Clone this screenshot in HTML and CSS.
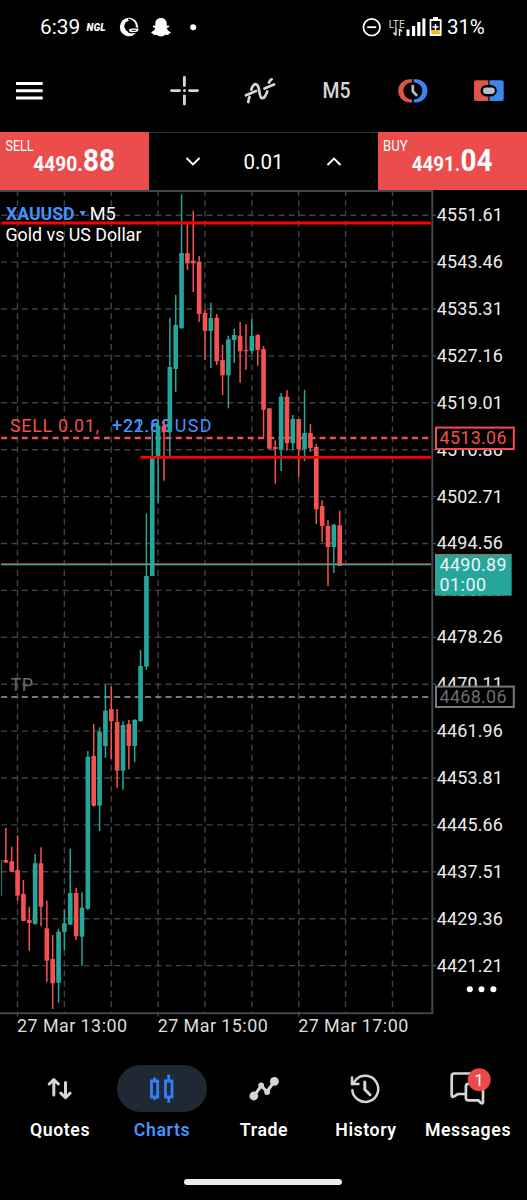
FILE: index.html
```html
<!DOCTYPE html>
<html lang="en">
<head>
<meta charset="utf-8">
<title>XAUUSD M5</title>
<link rel="stylesheet" href="styles.css">
</head>
<body>
<div class="phone">
  <header class="status">
    <span class="time">6:39</span>
    <span class="ngl">NGL</span>
    <svg class="st-notes" viewBox="118 15 80 24" width="80" height="24">
      <circle cx="129" cy="27" r="9.2" fill="#fff"/>
      <circle cx="130" cy="26.3" r="5.7" fill="#000"/>
      <path d="M128 19.5a7 7 0 0 1 7 6" stroke="#000" stroke-width="1.3" fill="none"/>
      <rect x="127.5" y="27.3" width="11.3" height="6" rx="3" fill="#000"/>
      <path d="M129 30.5a3 2 0 0 1 3-2h6.5a3 3 0 0 1-3 3.600h-3a3 2 0 0 1-3.500-1.600z" fill="#fff"/>
      <path d="M131.500 30.300h4.500" stroke="#000" stroke-width=".9"/>
      <path d="M161 18c3.700 0 5.700 2.600 5.700 5.800v2l1.700-.3c1 0 1.100 1.200.2 1.700l-1.800.9c.5 1.900 1.700 3.200 3.600 3.900.8.5.3 1.400-1.600 1.700l-.5 1.200-2.200-.1c-1.800.2-2.700 1.700-5.100 1.700s-3.300-1.500-5.100-1.700l-2.200.1-.5-1.200c-1.900-.3-2.400-1.200-1.600-1.700 1.900-.7 3.100-2 3.600-3.900l-1.800-.9c-.9-.5-.8-1.700.2-1.700l1.700.3v-2c0-3.200 2-5.800 5.700-5.800z" fill="#fff"/>
      <circle cx="193.200" cy="27.300" r="3" fill="#fff"/>
    </svg>
    <svg class="st-sys" viewBox="362 14 82 24" width="82" height="24">
      <circle cx="371.700" cy="26.200" r="8.300" fill="none" stroke="#fff" stroke-width="1.700"/>
      <path d="M367.200 26.200h9" stroke="#fff" stroke-width="1.800"/>
      <text x="388.700" y="27" class="lte" textLength="16" lengthAdjust="spacingAndGlyphs">LTE</text>
      <path d="M396 27v7m-2.500-2.500 2.500 3M399.500 35v-7m0 0 2.500 2.500" stroke="#ddd" stroke-width="1.500" fill="none"/>
      <path d="M406.500 28.500h3v6.500h-3zM412 25h3.200v10h-3.200zM417.200 21h3.200v14h-3.200zM422.400 17.500h3v17.500h-3z" fill="#fff"/>
      <path d="M433 16h5v2h2.600q1 0 1 1v15q0 1-1 1h-10q-1 0-1-1v-15q0-1 1-1h2.400z" fill="#fff"/>
      <path d="M431.300 20h8.500v9h-8.500z" fill="#000"/>
      <path d="M431.300 29h8.500v4.200h-8.500z" fill="#fbb812"/>
      <path d="M432.500 26h6M435.500 23v6" stroke="#fff" stroke-width="1.500"/>
    </svg>
    <span class="pct">31%</span>
  </header>

  <div class="toolbar">
    <svg viewBox="14 74 30 34" width="30" height="34"><path d="M16 83.500h26.700M16 90.700h26.700M16 98h26.700" stroke="#fff" stroke-width="2.900"/></svg>
    <svg class="t-cross" viewBox="168 74 32 34" width="32" height="34"><path d="M184.400 77.500v8M184.400 96v8M171.500 90.600h8M189.500 90.600h8" stroke="#d5d5d5" stroke-width="2.900" stroke-linecap="round"/><circle cx="184.500" cy="90.600" r="1.500" fill="#d5d5d5"/></svg>
    <svg class="t-ind" viewBox="243 74 34 34" width="34" height="34">
      <g fill="none" stroke="#d5d5d5" stroke-width="2.700" stroke-linecap="round">
        <path d="M246 95.300 256 91M264.500 88.500l9.500-4"/>
        <path d="M248.300 102.200c.2-2 .5-3.500 1.200-5.200M251.300 89.500c1.500-4.500 3.300-6 5.200-5 4 2 2 13.500 5.500 13.700 2.300.1 4.200-3.500 5.200-6.700M269 82.500c.7-1.700 1.300-2.600 2.600-3.200"/>
      </g>
    </svg>
    <svg class="t-m5" viewBox="320 76 34 30" width="34" height="30"><text x="322.500" y="98" textLength="28" lengthAdjust="spacingAndGlyphs">M5</text></svg>
    <svg class="t-clock" viewBox="397 76 32 30" width="32" height="30">
      <path d="M412 79.200h-2.200a11.600 11.600 0 0 0 0 23.200h2.200v-3a8.600 8.600 0 0 1 0-17.200z" fill="#dc5548"/>
      <path d="M413.700 79.200h2.200a11.600 11.600 0 0 1 0 23.200h-2.200v-3a8.600 8.600 0 0 0 0-17.200z" fill="#3b86ec"/>
      <path d="M412.800 85v6.200l4.200 4.600" fill="none" stroke="#b3c0c6" stroke-width="2.700"/>
    </svg>
    <svg class="t-trade" viewBox="473 76 32 30" width="32" height="30">
      <path d="M476 80.300h12.400v20.700H476q-2 0-2-2V82.300q0-2 2-2z" fill="#dc5548"/>
      <path d="M489.500 80.300h12.200q2 0 2 2V99q0 2-2 2h-12.200z" fill="#3b86ec"/>
      <rect x="480.600" y="85" width="16.200" height="11.500" rx="5.700" fill="#000"/>
      <rect x="483" y="87.500" width="11.800" height="6.500" rx="3.200" fill="#b3c0c6"/>
    </svg>
  </div>

  <div class="deal">
    <div class="side">
      <svg viewBox="0 132 149 58" width="149" height="58">
        <text x="5.500" y="151" class="lbl" textLength="28" lengthAdjust="spacingAndGlyphs">SELL</text>
        <text x="33.300" y="171" class="int" textLength="49.500" lengthAdjust="spacingAndGlyphs">4490.</text>
        <text x="83" y="171" class="dec" textLength="32" lengthAdjust="spacingAndGlyphs">88</text>
      </svg>
    </div>
    <div class="volume">
      <svg viewBox="0 0 16 9" width="16" height="9"><path d="M1.500 1 8 7.500 14.500 1"/></svg>
      <span>0.01</span>
      <svg viewBox="0 0 16 9" width="16" height="9"><path d="M1.500 8 8 1.500 14.500 8"/></svg>
    </div>
    <div class="side">
      <svg viewBox="378 132 149 58" width="149" height="58">
        <text x="383" y="151" class="lbl" textLength="24.500" lengthAdjust="spacingAndGlyphs">BUY</text>
        <text x="411.800" y="171" class="int" textLength="48.500" lengthAdjust="spacingAndGlyphs">4491.</text>
        <text x="460.500" y="171" class="dec" textLength="32" lengthAdjust="spacingAndGlyphs">04</text>
      </svg>
    </div>
  </div>

  <svg class="chart" viewBox="0 190 527 855" width="527" height="855">
    <g id="grid"></g>
    <text x="10" y="432.300" class="c-red" textLength="89">SELL 0.01,</text>
    <text x="112" y="432.300" class="c-blue" textLength="59">+22.88</text>
    <text x="112" y="432.300" class="c-blue" textLength="59">+21.68</text>
    <text x="174.700" y="432.300" class="c-blue" textLength="36.700">USD</text>
    <text x="10.500" y="690.500" class="c-grey" textLength="22.500">TP</text>
    <path d="M1.200 438H431" class="dash" stroke="#f0504f" stroke-width="2.400"/>
    <path d="M1.200 697H431" class="dash" stroke="#77777d" stroke-width="2"/>
    <path d="M1 563.700H431" stroke="#a94442" stroke-width="1"/>
    <g id="candles"></g>
    <path d="M1 564.700H431" stroke="#4aa79c" stroke-width="1.300"/>
    <path d="M1.500 223H431M140.500 457.400H431" stroke="#f00" stroke-width="2.900"/>
    <text x="6" y="219.500" class="sym" textLength="68.500" lengthAdjust="spacingAndGlyphs">XAUUSD</text>
    <path d="M79.500 211h6.200l-3.100 5.300z" fill="#4394fa"/>
    <text x="89.700" y="219.500" class="c-white" textLength="26" lengthAdjust="spacingAndGlyphs">M5</text>
    <text x="5.500" y="240.700" class="c-white" textLength="136" lengthAdjust="spacingAndGlyphs">Gold vs US Dollar</text>
    <path d="M0 191H433M432.300 190V1013.200M0 1013.200H433.300" stroke="#3f464e" stroke-width="2"/>
    <g id="prices"></g>
    <rect x="436" y="427.600" width="77.800" height="21.400" fill="#000" stroke="#f0504f" stroke-width="2"/>
    <text x="439.500" y="443.700" class="c-red" textLength="67">4513.06</text>
    <rect x="435" y="554" width="76.700" height="41.700" fill="#26a69a"/>
    <path d="M435 554.400h76.700" stroke="#b4574f" stroke-width="1"/>
    <text x="439.500" y="571" class="tag" textLength="67">4490.89</text>
    <text x="439.500" y="591.300" class="tag" textLength="46.500">01:00</text>
    <rect x="436" y="686.600" width="77.800" height="20.400" fill="#000" stroke="#77777d" stroke-width="2"/>
    <text x="439.500" y="702.500" class="c-grey" textLength="67">4468.06</text>
    <g fill="#fff"><circle cx="469.800" cy="989.300" r="3"/><circle cx="481.500" cy="989.300" r="3"/><circle cx="493.400" cy="989.300" r="3"/></g>
    <g class="dates">
      <text x="17" y="1032" textLength="110">27 Mar 13:00</text>
      <text x="157.700" y="1032" textLength="110">27 Mar 15:00</text>
      <text x="298.200" y="1032" textLength="110">27 Mar 17:00</text>
    </g>
  </svg>

  <nav class="tabs">
    <a class="tab">
      <svg viewBox="40.500 1068 40 40" width="40" height="40"><g fill="none" stroke="#d5d5d5" stroke-width="3" stroke-linecap="round" stroke-linejoin="round"><path d="M54.300 1095v-15.200M49.700 1084l4.600-4.400 4.600 4.400"/><path d="M66 1082.500v15M61.300 1093.200l4.700 4.500 4.600-4.500"/></g></svg>
      <span>Quotes</span>
    </a>
    <a class="tab active">
      <svg viewBox="142 1068.500 40 40" width="40" height="40"><g fill="none" stroke="#2f80f5" stroke-width="2.800"><path d="M151.500 1081.500h6.200v16h-6.200zM154.600 1078v3.500M154.600 1097.500v3M165.500 1081.500h6.500v16h-6.500zM168.700 1075v6.500M168.700 1097.500v5.500"/></g></svg>
      <span>Charts</span>
    </a>
    <a class="tab">
      <svg viewBox="243.500 1068 40 40" width="40" height="40"><path d="M253.500 1096l7.300-10.300 5.700 6 7.500-10.500" fill="none" stroke="#d5d5d5" stroke-width="3"/><g fill="#d5d5d5"><circle cx="253.300" cy="1096" r="4.400"/><circle cx="260.700" cy="1085.500" r="2.900"/><circle cx="266.600" cy="1092" r="2.900"/><circle cx="273.900" cy="1081.300" r="4.400"/></g></svg>
      <span>Trade</span>
    </a>
    <a class="tab">
      <svg viewBox="346 1068 40 40" width="40" height="40"><g fill="none" stroke="#d5d5d5" stroke-width="2.500" stroke-linecap="round"><path d="M352.300 1090.200a13 13 0 1 0 2.800-9.500l-2.400 3.300"/><path d="M352 1077.500v6.500h6.500"/><path d="M364.800 1082v7.500l5.200 5.200" stroke-width="3"/></g></svg>
      <span>History</span>
    </a>
    <a class="tab">
      <svg viewBox="444.500 1065 46 45" width="46" height="45" class="msg"><g fill="none" stroke="#d5d5d5" stroke-width="2.700" stroke-linejoin="round"><path d="M464.500 1094h-7l-4.300 2.600q-2 .8-2-1.500v-19q0-2.600 2.600-2.600h19.700q2.600 0 2.600 2.500"/><path d="M482.500 1084.500v17q0 2.500-2 1.600l-2.700-2.800H468q-2.600 0-2.600-2.600v-11.200q0-2.600 2.600-2.600h14.500"/></g><circle cx="478.700" cy="1079.700" r="11.500" fill="#e94b4b"/><text x="478.600" y="1085.600" class="badge">1</text></svg>
      <span>Messages</span>
    </a>
  </nav>
  <div class="home"></div>
</div>
<script src="chart.js"></script>
</body>
</html>
```

FILE: styles.css
```css
* { box-sizing: border-box; }
body { margin: 0; background: #000; color: #fff; font-family: Roboto, "Liberation Sans", sans-serif; }
.phone { width: 527px; height: 1200px; display: flex; flex-direction: column; background: #000; overflow: hidden; }
svg { display: block; flex: none; }

.status { height: 54px; display: flex; align-items: center; padding-left: 40px; }
.time { width: 46.500px; font-size: 20.800px; }
.ngl { width: 31.500px; font-size: 10px; font-weight: 900; font-style: italic; letter-spacing: .2px; }
.st-sys { margin-left: 164px; }
.pct { margin-left: 3px; font-size: 20.500px; letter-spacing: -.1px; }
.lte { font-size: 11.500px; fill: #ddd; }

.toolbar { height: 78px; display: flex; align-items: center; padding: 0 0 4px 14px; }
.t-cross { margin-left: 124px; }
.t-ind { margin-left: 43px; }
.t-m5 { margin-left: 43px; margin-right: 43px; font-size: 22.500px; font-weight: 500; fill: #d5d5d5; }
.t-trade { margin-left: 44px; }

.deal { height: 58px; display: flex; justify-content: space-between; }
.side { width: 149px; background: #eb4d4d; fill: #fff; }
.lbl { font-size: 14.800px; }
.int { font-size: 20.700px; font-weight: 700; }
.dec { font-size: 30.800px; font-weight: 700; }
.volume { flex: 1; display: flex; align-items: center; justify-content: space-between; padding: 0 36px; border-top: 1px solid #2b3947; font-size: 20.500px; }
.volume path { fill: none; stroke: #fff; stroke-width: 1.900; }

.chart { font-size: 17.900px; }
.c-red { fill: #f0504f; }
.c-blue { fill: #4394fa; }
.c-grey { fill: #6c6c71; }
.c-white { fill: #fff; }
.tag { fill: #e9f6f5; }
.sym { fill: #4394fa; font-weight: 700; }
.dash { stroke-dasharray: 6 4.270; fill: none; }
.grid-line { stroke: #3d434b; stroke-width: 1.400; stroke-dasharray: 6 4.270; }
.tick { stroke: #4a5058; stroke-width: 1.300; }
.up { fill: #26a69a; }
.down { fill: #f4524f; }
.dates { fill: #dcdcdc; }
.price { fill: #ececec; }

.tabs { display: grid; grid-template-columns: repeat(5, 1fr); padding: 20px 8.500px 0; height: 134px; }
.tab { display: flex; flex-direction: column; align-items: center; font-size: 17.700px; font-weight: 600; letter-spacing: .6px; line-height: 22px; }
.tab span { margin-left: 1px; }
.tab svg { padding: 3px 25px 4px; width: 90px; height: 47px; border-radius: 24px; margin-bottom: 7px; }
.tab .msg { padding: 0 22px 2px; overflow: visible; }
.tab.active { color: #4394fa; }
.tab.active svg { background: #202833; }
.badge { font-size: 16px; fill: #fff; text-anchor: middle; letter-spacing: 0; font-weight: 400; }
.home { width: 158px; height: 6px; border-radius: 3px; background: #ededed; margin-left: 184px; }
```

FILE: chart.js
```js
const NS = "http://www.w3.org/2000/svg";
function add(parent, tag, attrs, text) {
  const el = document.createElementNS(NS, tag);
  for (const k in attrs) el.setAttribute(k, attrs[k]);
  if (text) el.textContent = text;
  document.getElementById(parent).appendChild(el);
}

// Grid and price scale
for (let i = 0; i < 17; i++) {
  const y = 215.2 + i * 46.9;
  add("grid", "path", { class: "grid-line", d: `M1.2 ${y}H431` });
  add("prices", "path", { class: "tick", d: `M433 ${y}h3` });
  add("prices", "text", { class: "price", x: 436.8, y: y + 5.9, textLength: 66 }, (4551.61 - i * 8.15).toFixed(2));
}
for (let i = 0; i < 9; i++) {
  const x = 17.5 + i * 46.87;
  add("grid", "path", { class: "grid-line", d: `M${x} 190V1013` });
  if (i % 3 === 0 && i < 7) add("prices", "path", { class: "tick", d: `M${x} 1013v3.500` });
}

// Candles: [up, high, low, body top, body bottom]
const candles = [
  [0,828,862.7,860,862.7],[0,846.7,872,861.3,871.7],[0,835.7,900.7,870,895.7],[0,880,921,894,921],
  [0,906.7,950.7,920,923],[1,854,924.7,863.3,924],[0,847.3,926,863.3,906.7],[0,900.7,982,928.3,960.7],
  [0,935,1009,959,983.3],[1,928.7,1002.7,931.7,982.7],[1,909.3,950,923.3,932],[1,848.7,924.7,893,924.7],
  [0,888,940,893,936.3],[1,892.3,965.7,907.7,936.7],[1,751,910,756.7,908.7],[0,724,806.7,756,805.7],
  [1,727.3,831,731.7,805.7],[1,685,757.7,710.7,746],[0,686.7,758.7,709,721.3],[0,709,787.7,722,770.7],
  [1,721.3,789.7,725,770.7],[0,720,769.3,724,746],[1,719,762.3,720,746],[1,650,721.3,666,721.3],
  [1,513.3,670,576,666.7],[1,429,576,457.6,576],[1,420,502.7,425.7,457],[0,420,480.7,425.7,432.3],
  [1,318,456.7,367,432.3],[1,295,392,325,369],[1,194.3,328.7,253,328.3],[0,224.3,270,253,263.3],
  [0,210.7,292,260.7,263.3],[0,256,322,262,314],[0,309.3,360,313,331],[1,302.7,368,318,331],
  [0,314,365,317.7,361.3],[0,345,395,360,375.3],[1,335.7,408.3,339.3,375.3],[1,328.7,363,335,340],
  [0,322,382.7,335.7,351.3],[0,324,370,350,351.2],[1,319,354,336,351],[0,334,365.7,335,350],
  [0,346,437.3,349,409.7],[0,408.3,448.7,408.3,448.7],[0,440.3,483.7,447,449],[1,393,471,396.7,449.3],
  [0,390,450.7,396.7,443.3],[1,415,450,419,443.3],[0,419,477,419,449.3],[1,390,461,433,449.3],
  [0,424,452,433,448],[0,444,524,447,509.3],[0,500.3,542,506,526],[0,520,586,526,547],
  [1,524,573,524.7,547],[0,510.7,566,525.3,566]
];
add("candles", "rect", { class: "up", x: 1, y: 860, width: 1.2, height: 36, opacity: 0.7 });
candles.forEach(([up, high, low, top, bottom], i) => {
  const x = 5.85 + i * 5.857;
  const cls = up ? "up" : "down";
  add("candles", "rect", { class: cls, x: x - 0.75, y: high, width: 1.5, height: low - high });
  add("candles", "rect", { class: cls, x: x - 2.3, y: top, width: 4.6, height: bottom - top });
});
```
